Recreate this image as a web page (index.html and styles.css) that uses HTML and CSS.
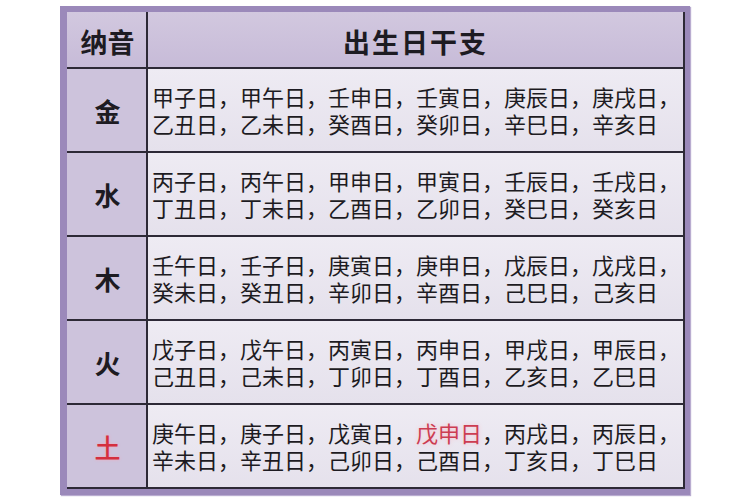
FILE: index.html
```html
<!DOCTYPE html>
<html lang="zh">
<head>
<meta charset="utf-8">
<title>纳音</title>
<link rel="stylesheet" href="styles.css">
</head>
<body>
<div class="frame">
  <div class="table">
    <div class="cell head left">纳音</div>
    <div class="cell head title">出生日干支</div>

    <div class="cell elem">金</div>
    <div class="cell body"><div>甲子日，甲午日，壬申日，壬寅日，庚辰日，庚戌日，</div><div>乙丑日，乙未日，癸酉日，癸卯日，辛巳日，辛亥日</div></div>

    <div class="cell elem">水</div>
    <div class="cell body"><div>丙子日，丙午日，甲申日，甲寅日，壬辰日，壬戌日，</div><div>丁丑日，丁未日，乙酉日，乙卯日，癸巳日，癸亥日</div></div>

    <div class="cell elem">木</div>
    <div class="cell body"><div>壬午日，壬子日，庚寅日，庚申日，戊辰日，戊戌日，</div><div>癸未日，癸丑日，辛卯日，辛酉日，己巳日，己亥日</div></div>

    <div class="cell elem">火</div>
    <div class="cell body"><div>戊子日，戊午日，丙寅日，丙申日，甲戌日，甲辰日，</div><div>己丑日，己未日，丁卯日，丁酉日，乙亥日，乙巳日</div></div>

    <div class="cell elem red">土</div>
    <div class="cell body"><div>庚午日，庚子日，戊寅日，<span class="hl">戊申日</span>，丙戌日，丙辰日，</div><div>辛未日，辛丑日，己卯日，己酉日，丁亥日，丁巳日</div></div>
  </div>
</div>
</body>
</html>
```
FILE: styles.css
```css
html, body {
  margin: 0;
  padding: 0;
  background: #ffffff;
}
body {
  width: 750px;
  height: 500px;
  overflow: hidden;
  font-family: "Noto Sans CJK SC", "Noto Sans", sans-serif;
  color: #1d1b22;
}
.frame {
  margin: 6px 0 0 60px;
  width: 618px;
  height: 477px;
  border-style: solid;
  border-color: #9b89ba;
  border-width: 6px 5px 6px 7px;
  box-shadow: inset 1px 1px 0 #d9d0e6, 1px 1px 1px #b9acd0;
}
.table {
  display: grid;
  grid-template-columns: 79px 535px;
  grid-template-rows: 55px repeat(5, 82px);
  gap: 2px;
  padding: 0 2px 2px 0;
  background: #2d2936;
  height: 475px;
}
.cell {
  display: flex;
  align-items: center;
}
.head {
  background: linear-gradient(#d2c8df, #c7bbd8);
  font-size: 27px;
  font-weight: 700;
  justify-content: center;
  padding-top: 3px;
  box-sizing: border-box;
}
.head.left {
  padding-left: 2px;
}
.title {
  letter-spacing: 2px;
}
.elem {
  background: #cdc3dc;
  justify-content: center;
  font-size: 26px;
  font-weight: 700;
  padding-left: 2px;
}
.elem.red {
  color: #d42f3e;
  font-weight: 500;
  text-shadow: 0 0 3px #f2a8b8;
}
.body {
  background: linear-gradient(#eeebf3, #e5e1ec);
  flex-direction: column;
  align-items: flex-start;
  justify-content: center;
  padding-left: 4px;
  font-size: 22px;
  line-height: 27px;
  white-space: nowrap;
}
.hl {
  color: #cc3d52;
  text-shadow: 0 0 4px #f6c2cc;
}
```
